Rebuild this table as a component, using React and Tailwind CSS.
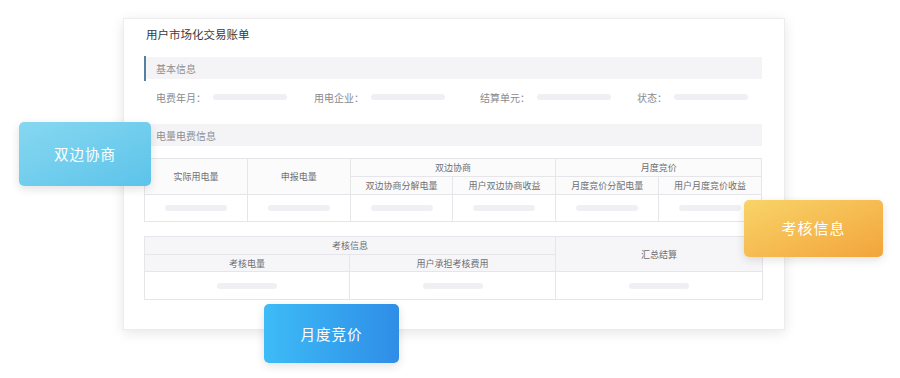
import React from "react"

const Bar = ({ w = "w-[74px]" }) => <div className={`h-[6px] ${w} rounded-full bg-[#eef0f3]`} />

const InfoItem = ({ label, width }) => (
  <div className={`flex items-center ${width}`}>
    <span className="text-[10px] text-[#8a8a8e]">{label}</span>
    <div className="ml-[7px]">
      <Bar />
    </div>
  </div>
)

const SectionBar = ({ title, accent }) => (
  <div className="flex h-[22px] items-center bg-[#f4f4f6] pl-3">
    {accent && <div className="-ml-3 mr-[10px] h-[25px] w-[2px] bg-[#55809e]" />}
    <span className="text-[10px] text-[#8e8e92]">{title}</span>
  </div>
)

const th = "border border-[#e6e6ea] text-[9px] font-normal text-[#6e6e72] leading-none"
const td = "border border-[#e6e6ea]"

const Badge = ({ className, children }) => (
  <div
    className={`absolute flex items-center justify-center rounded-[5px] text-white tracking-[1px] shadow-[0_3px_10px_rgba(0,0,0,0.12)] ${className}`}
  >
    {children}
  </div>
)

export default function App() {
  return (
    <div
      className="relative h-[378px] w-[900px] overflow-hidden bg-white pt-[18px]"
      style={{ fontFamily: '"Noto Sans CJK SC", "Noto Sans", sans-serif' }}
    >
      {/* bill card */}
      <div className="ml-[123px] h-[312px] w-[662px] border border-[#ececee] bg-white px-[20px] pt-[7px] shadow-[0_3px_12px_rgba(0,0,0,0.10)]">
        <div className="pl-[2px] text-[11.5px] leading-[16px] text-[#3a3a3c]">用户市场化交易账单</div>

        <div className="mt-[15px] mr-[2px]">
          <SectionBar title="基本信息" accent />
        </div>

        <div className="mt-[10px] flex h-[16px] items-center pl-3">
          <InfoItem label="电费年月：" width="w-[158px]" />
          <InfoItem label="用电企业：" width="w-[166px]" />
          <InfoItem label="结算单元：" width="w-[157px]" />
          <InfoItem label="状态：" width="w-[120px]" />
        </div>

        <div className="mt-[19px] mr-[2px]">
          <SectionBar title="电量电费信息" />
        </div>

        {/* energy & fee table */}
        <table className="mt-[12px] w-[618px] table-fixed border-collapse">
          <thead>
            <tr className="h-[18px] bg-[#fbfbfc]">
              <th rowSpan={2} className={th}>实际用电量</th>
              <th rowSpan={2} className={th}>申报电量</th>
              <th colSpan={2} className={th}>双边协商</th>
              <th colSpan={2} className={th}>月度竞价</th>
            </tr>
            <tr className="h-[18px] bg-[#fbfbfc]">
              <th className={th}>双边协商分解电量</th>
              <th className={th}>用户双边协商收益</th>
              <th className={th}>月度竞价分配电量</th>
              <th className={th}>用户月度竞价收益</th>
            </tr>
          </thead>
          <tbody>
            <tr className="h-[27px]">
              {[0, 1, 2, 3, 4, 5].map((i) => (
                <td key={i} className={td}>
                  <div className="flex justify-center">
                    <Bar w="w-[62px]" />
                  </div>
                </td>
              ))}
            </tr>
          </tbody>
        </table>

        {/* assessment table */}
        <table className="mt-[14px] w-[618px] table-fixed border-collapse">
          <colgroup>
            <col className="w-[205px]" />
            <col className="w-[206px]" />
            <col className="w-[207px]" />
          </colgroup>
          <thead>
            <tr className="h-[18px] bg-[#f6f6f8]">
              <th colSpan={2} className={th}>考核信息</th>
              <th rowSpan={2} className={th}>汇总结算</th>
            </tr>
            <tr className="h-[17px] bg-[#f6f6f8]">
              <th className={th}>考核电量</th>
              <th className={th}>用户承担考核费用</th>
            </tr>
          </thead>
          <tbody>
            <tr className="h-[28px]">
              {[0, 1, 2].map((i) => (
                <td key={i} className={td}>
                  <div className="flex justify-center">
                    <Bar w="w-[60px]" />
                  </div>
                </td>
              ))}
            </tr>
          </tbody>
        </table>
      </div>

      {/* floating labels */}
      <Badge className="left-[19px] top-[122px] h-[64px] w-[132px] bg-gradient-to-br from-[#86d8f0] to-[#5cc3ea] text-[14.5px]">
        双边协商
      </Badge>
      <Badge className="left-[744px] top-[200px] h-[57px] w-[139px] bg-gradient-to-br from-[#f8d468] to-[#f2a43a] text-[15px]">
        考核信息
      </Badge>
      <Badge className="left-[264px] top-[304px] h-[59px] w-[135px] bg-gradient-to-r from-[#3ebcf7] to-[#2f8de6] text-[14.5px]">
        月度竞价
      </Badge>
    </div>
  )
}
